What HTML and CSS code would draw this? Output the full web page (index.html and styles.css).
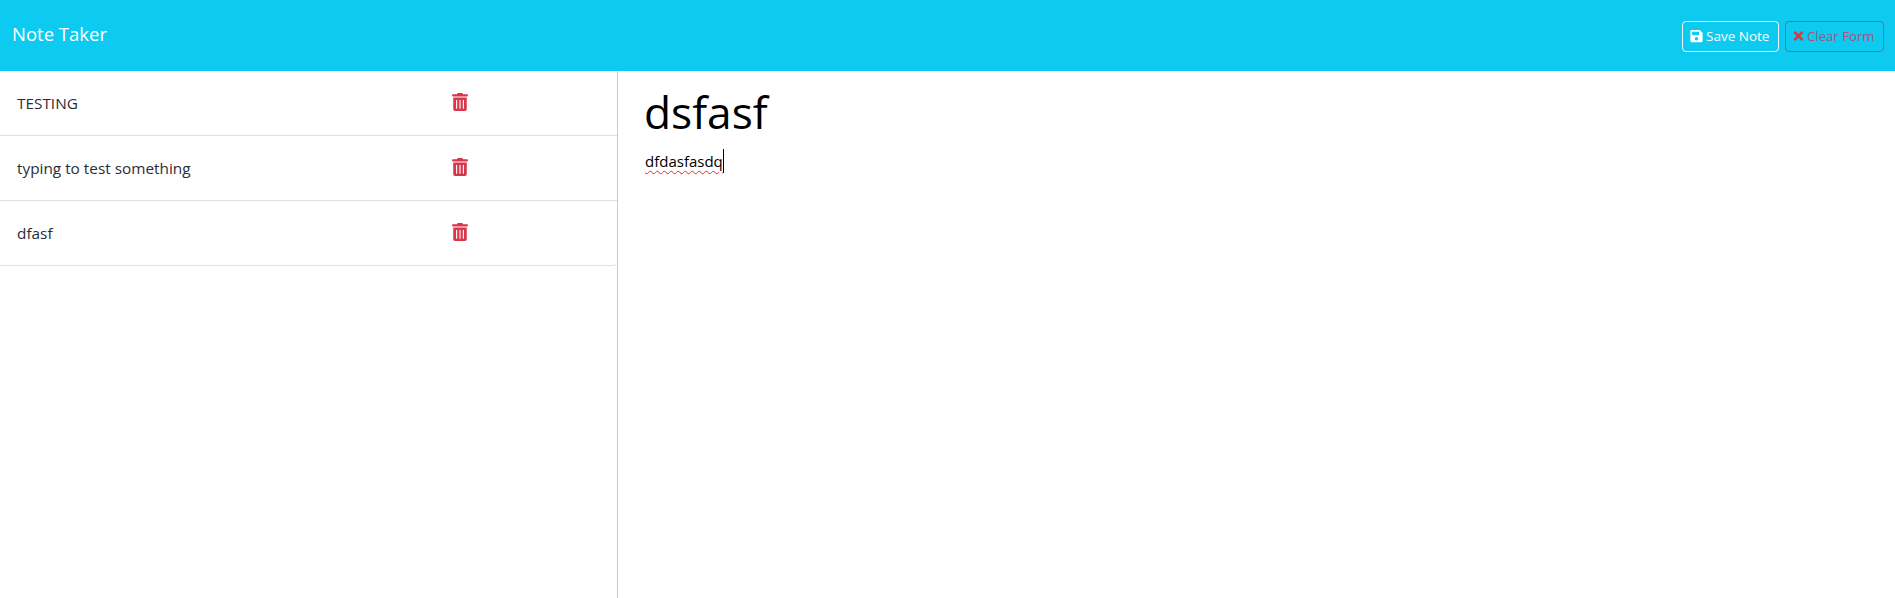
FILE: index.html
```html
<!DOCTYPE html>
<html lang="en">
<head>
<meta charset="utf-8">
<title>Note Taker</title>
<link rel="stylesheet" href="styles.css">
</head>
<body>
<nav class="navbar">
  <a class="brand">Note Taker</a>
  <div class="actions">
    <button class="btn btn-save">
      <svg class="btn-icon" viewBox="0 0 448 512"><path d="M433.941 129.941l-83.882-83.882A48 48 0 0 0 316.118 32H48C21.49 32 0 53.49 0 80v352c0 26.51 21.49 48 48 48h352c26.51 0 48-21.49 48-48V163.882a48 48 0 0 0-14.059-33.941zM224 416c-35.346 0-64-28.654-64-64 0-35.346 28.654-64 64-64s64 28.654 64 64c0 35.346-28.654 64-64 64zm96-304.52V212c0 6.627-5.373 12-12 12H76c-6.627 0-12-5.373-12-12V108c0-6.627 5.373-12 12-12h228.52c3.183 0 6.235 1.264 8.485 3.515l3.48 3.48A11.996 11.996 0 0 1 320 111.48z"/></svg>
      Save Note
    </button>
    <button class="btn btn-clear">
      <svg class="btn-icon times" viewBox="0 0 352 512"><path d="M242.72 256l100.07-100.07c12.28-12.28 12.28-32.19 0-44.48l-22.24-22.24c-12.28-12.28-32.19-12.28-44.48 0L176 189.28 75.93 89.21c-12.28-12.28-32.19-12.28-44.48 0L9.21 111.45c-12.28 12.28-12.28 32.19 0 44.48L109.28 256 9.21 356.07c-12.28 12.28-12.28 32.19 0 44.48l22.24 22.24c12.28 12.28 32.2 12.28 44.48 0L176 322.72l100.07 100.07c12.28 12.28 32.2 12.28 44.48 0l22.24-22.24c12.28-12.28 12.28-32.19 0-44.48L242.72 256z"/></svg>
      Clear Form
    </button>
  </div>
</nav>
<main class="layout">
  <aside class="sidebar">
    <ul class="note-list">
      <li class="note-item"><span class="note-title">TESTING</span><svg class="trash" viewBox="0 0 448 512"><path d="M32 464a48 48 0 0 0 48 48h288a48 48 0 0 0 48-48V128H32zm272-256a16 16 0 0 1 32 0v224a16 16 0 0 1-32 0zm-96 0a16 16 0 0 1 32 0v224a16 16 0 0 1-32 0zm-96 0a16 16 0 0 1 32 0v224a16 16 0 0 1-32 0zM432 32H312l-9.4-18.7A24 24 0 0 0 281.1 0H166.8a23.72 23.72 0 0 0-21.4 13.3L136 32H16A16 16 0 0 0 0 48v32a16 16 0 0 0 16 16h416a16 16 0 0 0 16-16V48a16 16 0 0 0-16-16z"/></svg></li>
      <li class="note-item"><span class="note-title">typing to test something</span><svg class="trash" viewBox="0 0 448 512"><path d="M32 464a48 48 0 0 0 48 48h288a48 48 0 0 0 48-48V128H32zm272-256a16 16 0 0 1 32 0v224a16 16 0 0 1-32 0zm-96 0a16 16 0 0 1 32 0v224a16 16 0 0 1-32 0zm-96 0a16 16 0 0 1 32 0v224a16 16 0 0 1-32 0zM432 32H312l-9.4-18.7A24 24 0 0 0 281.1 0H166.8a23.72 23.72 0 0 0-21.4 13.3L136 32H16A16 16 0 0 0 0 48v32a16 16 0 0 0 16 16h416a16 16 0 0 0 16-16V48a16 16 0 0 0-16-16z"/></svg></li>
      <li class="note-item"><span class="note-title">dfasf</span><svg class="trash" viewBox="0 0 448 512"><path d="M32 464a48 48 0 0 0 48 48h288a48 48 0 0 0 48-48V128H32zm272-256a16 16 0 0 1 32 0v224a16 16 0 0 1-32 0zm-96 0a16 16 0 0 1 32 0v224a16 16 0 0 1-32 0zm-96 0a16 16 0 0 1 32 0v224a16 16 0 0 1-32 0zM432 32H312l-9.4-18.7A24 24 0 0 0 281.1 0H166.8a23.72 23.72 0 0 0-21.4 13.3L136 32H16A16 16 0 0 0 0 48v32a16 16 0 0 0 16 16h416a16 16 0 0 0 16-16V48a16 16 0 0 0-16-16z"/></svg></li>
    </ul>
  </aside>
  <section class="editor">
    <div class="editor-title">dsfasf</div>
    <div class="editor-body"><span class="misspelled">dfdasfasdq</span><span class="caret"></span></div>
  </section>
</main>
</body>
</html>
```
FILE: styles.css
```css
* { box-sizing: border-box; }
html, body { height: 100%; }
body {
  margin: 0;
  display: flex;
  flex-direction: column;
  overflow: hidden;
  background: #fff;
  color: #2a2e33;
  font-family: "Open Sans", "Noto Sans", "Liberation Sans", sans-serif;
  font-size: 15.35px;
}
.navbar {
  height: 71px;
  flex: none;
  background: #0dcaf0;
  display: flex;
  align-items: center;
  justify-content: space-between;
  padding: 0 11px 0 12px;
}
.brand { color: #fff; font-size: 18.5px; position: relative; top: -2px; }
.actions { display: flex; gap: 6px; margin-top: 1px; }
.btn {
  height: 31px;
  padding: 0 7px;
  border-radius: 4px;
  border: 1px solid #fff;
  background: transparent;
  font: inherit;
  font-size: 13.5px;
  display: flex;
  align-items: center;
  gap: 3px;
  white-space: nowrap;
}
.btn-save { width: 97px; color: #fff; border-color: #e8f9fd; }
.btn-clear { width: 99px; font-size: 13.2px; color: #a5567c; border-color: #6c6f8a; }
.btn-icon { width: 13px; height: 14px; fill: currentColor; flex: none; }
.btn-clear .times { fill: #dc3545; width: 11px; }
.layout { flex: 1; display: flex; min-height: 0; }
.sidebar {
  width: 618px;
  flex: none;
  border-right: 1px solid #ccc;
}
.note-list { list-style: none; margin: 0; padding: 0; }
.note-item {
  height: 65px;
  display: flex;
  align-items: center;
  border-bottom: 1px solid #dfdfdf;
  padding-left: 17px;
}
.note-item:last-child { border-bottom-right-radius: 4px; }
.note-title { width: 435px; flex: none; }
.trash { width: 16px; height: 18px; fill: #d93749; flex: none; margin-bottom: 2px; }
.editor { flex: 1; padding: 9px 26px; color: #000; }
.editor-title { font-size: 44.3px; line-height: 64px; }
.editor-body { font-size: 15px; line-height: 24px; margin-top: 5px; margin-left: 1px; display: flex; align-items: stretch; }
.misspelled { text-decoration: underline wavy #e0303a 1px; text-underline-offset: 3px; }
.caret { width: 1px; background: #000; }
```
